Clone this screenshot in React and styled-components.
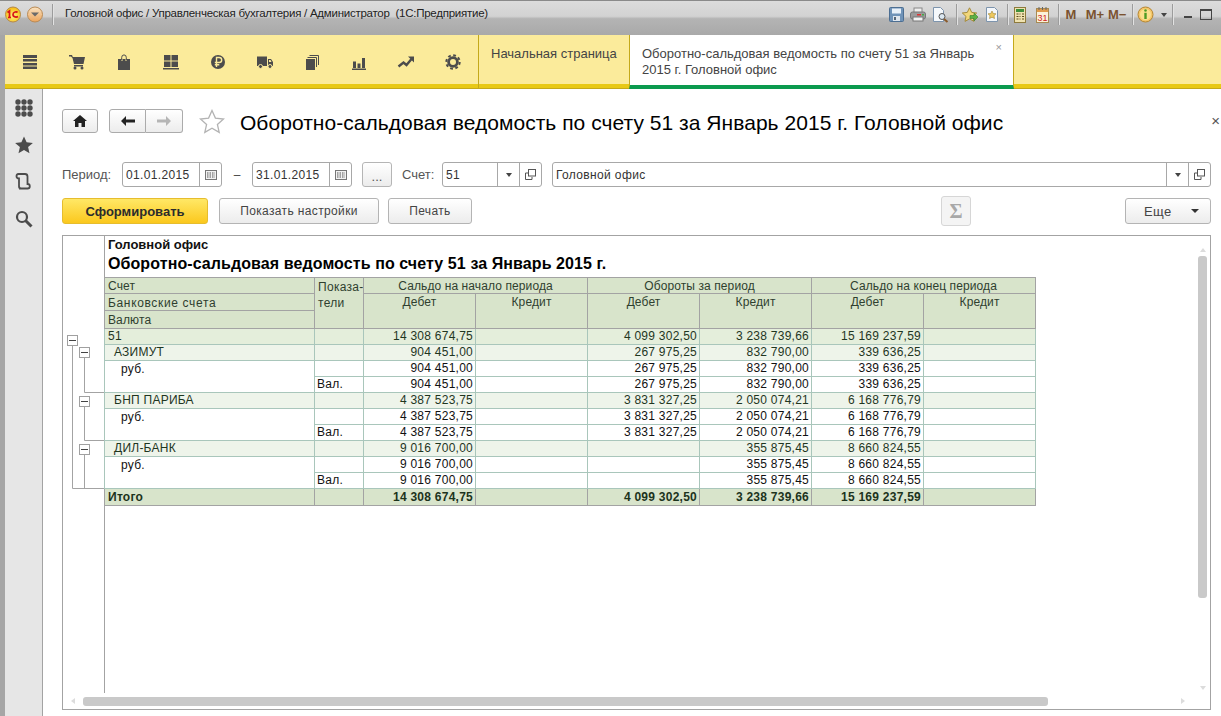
import React from 'react';
import styled, { createGlobalStyle } from 'styled-components';

const Global = createGlobalStyle`
  html, body { margin: 0; padding: 0; background: #fff; }
  body { font-family: "Liberation Sans", Arial, sans-serif; font-size: 12px; color: #222; }
`;

const Shell = styled.div`
  width: 1221px; height: 716px; overflow: hidden; display: flex; flex-direction: column; background: #fff;
`;
const TitleBar = styled.header`
  height: 35px; flex: none; box-sizing: border-box; display: flex; align-items: flex-start; padding: 3px 0 0 2px;
  border-top: 1px solid #8a8a8a;
  background: linear-gradient(#dcdcdc 0, #d2d2d2 45%, #b4b4b4 52%, #a9a9a9 100%);
`;
const Sep = styled.span`
  width: 1px; height: 21px; background: #9c9c9c; box-shadow: 1px 0 0 #e2e2e2; flex: none;
  margin: 0 ${p => p.$r || 0}px 0 ${p => p.$l || 0}px;
`;
const TitleText = styled.span`
  font-size: 11.5px; line-height: 18px; color: #222; margin-left: 12px; white-space: pre; letter-spacing: -0.022em;
`;
const TitleTools = styled.div`
  margin-left: auto; display: flex; align-items: center; height: 21px;
`;
const ToolSlot = styled.span`
  display: inline-flex; align-items: center; justify-content: center; width: ${p => p.$w}px; height: 20px; flex: none;
`;
const MemText = styled.span`
  font-size: 13px; font-weight: 700; color: #7a5230; width: ${p => p.$w}px; text-align: center; flex: none;
`;
const Lower = styled.div`
  flex: 1; min-height: 0; display: flex; flex-direction: column; border-left: 5px solid #a6a6a6;
`;
const SectionBar = styled.nav`
  height: 54px; flex: none; box-sizing: border-box; display: flex; background: #fbeb9b; position: relative;
  border-bottom: 1px solid #c4a91a; box-shadow: inset 0 -4px 0 #e8c916;
`;
const SectionIcons = styled.div`
  width: 473px; flex: none; box-sizing: border-box; display: flex; align-items: flex-start; padding: 18px 0 0 1px;
`;
const SectionCell = styled.span`
  width: 47px; display: flex; justify-content: center; flex: none; color: #4c4c4c;
`;
const Tab = styled.div`
  box-sizing: border-box; flex: none; width: ${p => p.$w}px; position: relative; font-size: 13px; line-height: 16px; color: #444;
  padding: ${p => (p.$active ? '11px 30px 0 12px' : '11px 8px 0 12px')};
  border-left: 1px solid #c4a91a;
  ${p => p.$active && `
    background: #fff; border-right: 1px solid #c4a91a; height: 54px; border-bottom: 4px solid #0b9a4e;
    box-shadow: inset 1px 0 0 #fff;
  `}
`;
const TabClose = styled.span`
  position: absolute; right: 11px; top: 5px; font-size: 11px; color: #999; line-height: 14px;
`;
const Body = styled.div`
  flex: 1; min-height: 0; display: flex;
`;
const Sidebar = styled.aside`
  width: 38px; flex: none; box-sizing: border-box; background: #e6e6e6; border-right: 1px solid #a3a3a3;
  display: flex; flex-direction: column; align-items: center; padding-top: 9px; gap: 17px; color: #4c4c4c;
`;
const Main = styled.main`
  flex: 1; min-width: 0; box-sizing: border-box; padding: 20px 10px 0 19px; display: flex; flex-direction: column;
`;
const HeadRow = styled.div`
  display: flex; align-items: center; height: 24px; margin-bottom: 29px;
`;
const NavBtn = styled.span`
  width: ${p => p.$w}px; height: 24px; box-sizing: border-box; display: inline-flex; align-items: center; justify-content: center;
  border: 1px solid #ababab; background: linear-gradient(#fff, #ececec); flex: none;
  border-radius: ${p => p.$radius || '3px'};
  ${p => p.$joined && 'border-left: none;'}
`;
const HomeBtn = styled(NavBtn)`margin-right: 11px;`;
const PageTitle = styled.h1`
  margin: 0 0 0 15px; padding-top: 4px; font-size: 21px; font-weight: 400; color: #000; white-space: nowrap; line-height: 24px; letter-spacing: 0.04px;
`;
const CloseX = styled.span`
  margin-left: auto; margin-right: -10px; font-size: 15px; color: #555; line-height: 20px; padding-right: 1px;
`;
const FilterRow = styled.div`
  display: flex; align-items: center; height: 25px; margin-bottom: 11px;
`;
const Label = styled.span`
  color: #555; font-size: 13px; width: ${p => p.$w}px; flex: none;
`;
const Dash = styled.span`
  width: 30px; flex: none; text-align: center; color: #444;
`;
const Field = styled.div`
  width: ${p => p.$w}px; height: 25px; box-sizing: border-box; flex: none; display: flex; border: 1px solid #a8a8a8; border-radius: 3px; background: #fff;
  margin-left: ${p => p.$ml || 0}px;
`;
const FieldText = styled.span`
  flex: 1; padding: 1px 0 0 3px; line-height: 23px; color: #333; font-size: 12px; letter-spacing: 0.03em;
`;
const FieldBtn = styled.span`
  width: 22px; flex: none; display: flex; align-items: center; justify-content: center; border-left: 1px solid #a8a8a8; box-sizing: border-box;
`;
const DotsBtn = styled.span`
  width: 30px; height: 25px; box-sizing: border-box; flex: none; margin: 0 10px; text-align: center; line-height: 27px; color: #555; font-size: 13px;
  border: 1px solid #b5b5b5; border-radius: 3px; background: linear-gradient(#fff, #ececec);
`;
const ActionRow = styled.div`
  display: flex; align-items: center; height: 26px; margin-bottom: 11px;
`;
const Btn = styled.span`
  height: 26px; width: ${p => p.$w}px; margin-right: ${p => p.$mr || 0}px; box-sizing: border-box; flex: none; display: inline-flex; align-items: center; justify-content: center;
  font-size: 12px; color: #444; border: 1px solid #b4b4b4; border-radius: 3px; background: linear-gradient(#fff, #ececec); letter-spacing: 0.03em;
`;
const PrimaryBtn = styled(Btn)`
  background: linear-gradient(#ffe866, #fbc81e); border-color: #e6bd2e; color: #2c2c2c; font-weight: 700; font-size: 13px; letter-spacing: 0;
`;
const SigmaBtn = styled.span`
  margin-left: auto; width: 30px; height: 30px; margin-top: -2px; margin-bottom: -2px; box-sizing: border-box; flex: none; display: inline-flex; align-items: center; justify-content: center;
  border: 1px solid #d6d6d6; border-radius: 3px; background: #f4f4f4; color: #a8a8a8; font: 700 20px "Liberation Serif", serif;
`;
const MoreBtn = styled(Btn)`
  margin-left: 154px; justify-content: flex-start; padding-left: 18px; position: relative; font-size: 13px;
`;
const MoreCaret = styled.span`
  position: absolute; right: 11px; top: 10px; width: 0; height: 0; border: 4px solid transparent; border-top: 4px solid #333; border-bottom: none;
`;
const Report = styled.section`
  height: 475px; width: 1149px; box-sizing: border-box; flex: none; position: relative; display: flex; align-items: flex-start; border: 1px solid #a3a3a3; overflow: hidden;
`;
const Gutter = styled.svg`
  width: 41px; height: 457px; flex: none; display: block;
`;
const Sheet = styled.div`
  height: 457px; box-sizing: border-box; border-left: 1px solid #a3a3a3; flex: none;
`;
const SheetOrg = styled.div`
  font-weight: 700; color: #111; font-size: 13px; line-height: 16px; padding: 1px 0 0 3px; height: 15px;
`;
const SheetTitle = styled.div`
  font-weight: 700; color: #000; font-size: 16px; line-height: 24px; height: 25px; padding-left: 3px; white-space: nowrap; letter-spacing: 0.09px;
`;
const Grid = styled.table`
  border-collapse: collapse; table-layout: fixed; width: 931px; margin-left: -1px; font-size: 12px;
  border-top: 1px solid #a3a3a3;
`;
const Hc = styled.td`
  box-sizing: border-box; background: #d8e4cb; color: #2f3f2f; border: 1px solid #a3a3a3; vertical-align: top; padding: ${p => p.$top ?? 1}px 3px 0;
  line-height: ${p => p.$lh || 14}px; overflow: hidden; white-space: pre;
  letter-spacing: ${p => p.$ls ?? 0.12}px;
  height: ${p => p.$h || 16}px; text-align: ${p => (p.$center ? 'center' : 'left')};
`;
const rowBg = { 1: '#e4eedb', 2: '#eef4ea', 3: '#fff', t: '#d8e4cb' };
const rowColor = { 1: '#1f361f', 2: '#1f361f', 3: '#111', t: '#1c331c' };
const Cell = styled.td`
  box-sizing: border-box; height: 16px; padding: ${p => p.$top || 0}px 2px 0 ${p => p.$pad ?? 2}px; line-height: 15px; white-space: pre; overflow: hidden; vertical-align: top;
  border: 1px solid ${p => (p.$kind === 't' ? '#a3a3a3' : '#a9c6bb')};
  background: ${p => rowBg[p.$kind]}; color: ${p => rowColor[p.$kind]};
  font-weight: ${p => (p.$kind === 't' ? 700 : 400)};
  text-align: ${p => (p.$num ? 'right' : 'left')};
  letter-spacing: 0.25px;
`;
const ScrollV = styled.span`
  position: absolute; right: 3px; top: 20px; width: 9px; height: 342px; background: #c9c9c9; border-radius: 3px;
`;
const ScrollH = styled.span`
  position: absolute; left: 20px; bottom: 3px; height: 9px; width: 965px; background: #c9c9c9; border-radius: 3px;
`;
const Arrow = styled.span`
  position: absolute; width: 0; height: 0; border: 3px solid transparent;
  ${p => p.$dir === 'up' && 'border-bottom: 4px solid #dcdcdc; border-top: none; right: 4px; top: 12px;'}
  ${p => p.$dir === 'down' && 'border-top: 4px solid #dcdcdc; border-bottom: none; right: 4px; bottom: 19px;'}
  ${p => p.$dir === 'left' && 'border-right: 4px solid #dcdcdc; border-left: none; left: 8px; bottom: 5px;'}
  ${p => p.$dir === 'right' && 'border-left: 4px solid #dcdcdc; border-right: none; right: 25px; bottom: 5px;'}
`;

const Ico = ({ w = 18, h = 18, children }) => (
  <svg width={w} height={h} viewBox={`0 0 ${w} ${h}`} fill="currentColor" style={{ display: 'block' }}>{children}</svg>
);

const LogoBall = () => (
  <svg width="22" height="22" viewBox="0 0 22 22" style={{ flex: 'none', display: 'block' }}>
    <defs>
      <radialGradient id="yb" cx="50%" cy="60%" r="60%"><stop offset="0" stopColor="#fff27a" /><stop offset="1" stopColor="#f6b90f" /></radialGradient>
    </defs>
    <circle cx="11" cy="10.5" r="7.5" fill="url(#yb)" stroke="#b5894a" strokeWidth="1" />
    <path d="M5.5 8.5l2-1.5v6M9 13.5h-3M15.5 8.5c-.6-1-4.5-1-4.5 2s3.800 2.800 5 2" fill="none" stroke="#d8141a" strokeWidth="1.7" />
  </svg>
);
const MenuBall = () => (
  <svg width="22" height="22" viewBox="0 0 22 22" style={{ flex: 'none', display: 'block' }}>
    <defs>
      <linearGradient id="ob" x1="0" y1="0" x2="0" y2="1"><stop offset="0" stopColor="#f9e3c2" /><stop offset="1" stopColor="#eda45a" /></linearGradient>
    </defs>
    <circle cx="11" cy="10.500" r="7.500" fill="url(#ob)" stroke="#b98a55" />
    <path d="M7 8.500h8l-4 4z" fill="#6a6a6a" />
  </svg>
);

const Floppy = () => <svg width="15" height="15" viewBox="0 0 15 15"><rect x=".5" y=".5" width="14" height="14" rx="1" fill="#6f93b8" stroke="#4c6e92" /><rect x="3" y="1.500" width="9" height="5" fill="#e8f0f8" /><rect x="4" y="9" width="7" height="5" fill="#dfe6ee" /><rect x="5" y="10" width="2" height="3" fill="#567" /></svg>;
const Printer = () => <svg width="16" height="15" viewBox="0 0 16 15"><rect x="4" y="1" width="8" height="5" fill="#eee" stroke="#888" /><rect x=".5" y="5" width="15" height="7" rx="2" fill="#9b9b9b" stroke="#777" /><rect x="3" y="10" width="10" height="4" fill="#f3f3f3" stroke="#777" /><rect x="7" y="7" width="4" height="1.500" fill="#d33" /><rect x="12" y="7" width="2" height="1.500" fill="#4a4" /></svg>;
const Preview = () => <svg width="17" height="16" viewBox="0 0 17 16"><path d="M1.500.5h7l3 3v11h-10z" fill="#f5f8fb" stroke="#7d94ad" /><circle cx="10" cy="9.500" r="3" fill="#dbe8f2" stroke="#555" /><path d="M12 12l3.500 3" stroke="#8a5a2b" strokeWidth="2" /></svg>;
const StarArrow = () => <svg width="17" height="16" viewBox="0 0 17 16"><path d="M7.500.8l2.200 4.600 5 .6-3.700 3.400 1 5-4.500-2.500-4.500 2.500 1-5L.3 6l5-.6z" fill="#f2d67a" stroke="#a58b3c" /><path d="M8 8.500h4V6l4 4-4 4v-2.500H8z" fill="#5db044" stroke="#37802a" strokeWidth=".6" /></svg>;
const DocStar = () => <svg width="12" height="15" viewBox="0 0 12 15"><path d="M.5.500h8l3 3v11H.5z" fill="#f4f7fb" stroke="#7d94ad" /><path d="M6 4l1.200 2.500 2.800.3-2 1.900.5 2.800L6 10.200l-2.500 1.300.5-2.800-2-1.900 2.800-.3z" fill="#eec95f" stroke="#9f8436" strokeWidth=".6" /></svg>;
const Calc = () => <svg width="12" height="16" viewBox="0 0 12 16"><rect x=".5" y=".5" width="11" height="15" fill="#efe2b0" stroke="#8e7a3c" /><rect x="2" y="2" width="8" height="3" fill="#3f8f3a" /><path d="M2.500 7h2M5.500 7h1M8 7h2M2.500 9.500h2M5.500 9.500h1M8 9.500h2M2.500 12h2M5.500 12h1M8 12h2" stroke="#5b4a1c" strokeWidth="1.200" /></svg>;
const Calend = () => <svg width="13" height="16" viewBox="0 0 13 16"><rect x=".5" y="1.500" width="12" height="14" fill="#fbf1d8" stroke="#a68a53" /><rect x="1" y="2" width="11" height="3" fill="#e09a4a" /><path d="M3 0v3M6.500 0v3M10 0v3" stroke="#666" /><text x="6.500" y="14" fontSize="9" fontFamily="Liberation Sans" fill="#d01f1f" textAnchor="middle">31</text></svg>;
const InfoBall = () => <svg width="17" height="17" viewBox="0 0 17 17"><circle cx="8.500" cy="8.500" r="7.500" fill="#f5c66a" stroke="#b48633" /><circle cx="8.500" cy="8.500" r="5.500" fill="#fbe08e" /><circle cx="8.500" cy="4.500" r="1.300" fill="#4d9b25" /><rect x="7.300" y="6.800" width="2.400" height="6.200" fill="#4d9b25" /></svg>;

const Calendar = () => (
  <svg width="12" height="10" viewBox="0 0 12 10" style={{ display: 'block' }}>
    <rect x=".5" y=".5" width="11" height="9" fill="#f2f2f2" stroke="#777" />
    <path d="M2 3h1.500M4.500 3H6M7 3h1.500M9.500 3H10M2 5h1.500M4.500 5H6M7 5h1.500M9.500 5H10M2 7h1.500M4.500 7H6M7 7h1.500M9.500 7H10" stroke="#555" />
  </svg>
);
const Caret = () => <svg width="6" height="4" viewBox="0 0 6 4" style={{ display: 'block' }}><path d="M0 0h6L3 4z" fill="#444" /></svg>;
const OpenIco = () => (
  <svg width="11" height="11" viewBox="0 0 11 11" style={{ display: 'block' }} fill="none" stroke="#555">
    <rect x="3.500" y=".5" width="7" height="6.500" /><path d="M3 4H.5v6.500H7V8" />
  </svg>
);

const sectionIcons = [
  <Ico key="menu"><path d="M2 2h14v3H2zM2 6h14v2.600H2zM2 10h14v2.600H2zM2 13.500h14V16H2z" /></Ico>,
  <Ico key="cart"><path d="M1 2h3l.8 2H17l-1.500 7H6L4.500 5 3 3.500H1zM6 12h9v1.500H6z" /><circle cx="7" cy="15" r="1.500" /><circle cx="14" cy="15" r="1.500" /></Ico>,
  <Ico key="bag"><path d="M3 6h3.500v2h1V6h3v2h1V6H15v11H3z" /><path d="M6.700 7V4.500a2.300 2.600 0 0 1 4.600 0V7" fill="none" stroke="currentColor" /></Ico>,
  <Ico key="grid"><path d="M2 2h6.500v5.500H2zM9.500 2H16v5.500H9.500zM2 8.500h6.500V14H2zM9.500 8.500H16V14H9.500zM1 15h16v1.500H1z" /></Ico>,
  <Ico key="rub"><circle cx="9" cy="9" r="7" /><path d="M7.500 14V4.500h2.700a2.500 2.500 0 0 1 0 5H5.800M5.800 11.800h4.500" fill="none" stroke="#fbeb9b" strokeWidth="1.400" /></Ico>,
  <Ico key="truck"><path d="M1 3.500h10V13H1zM12 6h3l2 3v4h-5z" /><circle cx="4.500" cy="13.500" r="2" stroke="#fbeb9b" /><circle cx="14" cy="13.500" r="2" stroke="#fbeb9b" /><path d="M13 7h1.500l1 2H13z" fill="#fbeb9b" /></Ico>,
  <Ico key="docs"><path d="M3 6h9v11H3z" /><path d="M4.500 4.500h9V14M6.500 2.500h9V12" fill="none" stroke="currentColor" /></Ico>,
  <Ico key="chart"><path d="M3 8.500h3V15H3zM7.500 10.500h3V15h-3zM12 5h3v10h-3zM2 15.500h14V17H2z" /></Ico>,
  <Ico key="trend"><path d="M1.500 13.500l5-4 3 2.500 5-6" fill="none" stroke="currentColor" strokeWidth="2.400" /><path d="M11 3.500h6v6z" /></Ico>,
  <Ico key="gear"><circle cx="9" cy="9" r="4.400" fill="none" stroke="currentColor" strokeWidth="2.800" /><circle cx="9" cy="9" r="6.700" fill="none" stroke="currentColor" strokeWidth="2" strokeDasharray="2.800 2.460" /></Ico>,
];

const GridIco = () => <Ico w={20} h={20}><g>{[0, 1, 2].flatMap(r => [0, 1, 2].map(c => <circle key={`${r}${c}`} cx={4 + c * 6} cy={4 + r * 6} r="2.700" />))}</g></Ico>;
const StarIco = () => <Ico w={20} h={20}><path d="M10 1.500l2.600 5.800 6.300.6-4.800 4.200 1.400 6.200L10 15.100l-5.500 3.200 1.400-6.200L1.100 7.900l6.300-.6z" /></Ico>;
const ClipIco = () => <Ico w={20} h={20}><path d="M5 16.500h8.500a2.300 2.300 0 0 0 2.300-2.300c0-1.300-1-2.200-2.300-2.200V4.500A2.500 2.500 0 0 0 11 2H4.500C3 2 2.500 3 2.500 4.300S3.500 6.500 5 6.500v7.700c0 1.300 1 2.300 2.300 2.300" fill="none" stroke="currentColor" strokeWidth="1.800" /></Ico>;
const SearchIco = () => <Ico w={20} h={20}><circle cx="8" cy="8" r="5" fill="none" stroke="currentColor" strokeWidth="2.200" /><path d="M11.500 11.500l6 6" stroke="currentColor" strokeWidth="3" /></Ico>;

const Mark = ({ x, y }) => (
  <g>
    <rect x={x + .5} y={y + .5} width="10" height="10" fill="#fff" stroke="#a0a0a0" />
    <path d={`M${x + 2} ${y + 5.500}h7`} stroke="#444" />
  </g>
);

const groups = [
  ['АЗИМУТ', '904 451,00', '267 975,25', '832 790,00', '339 636,25'],
  ['БНП ПАРИБА', '4 387 523,75', '3 831 327,25', '2 050 074,21', '6 168 776,79'],
  ['ДИЛ-БАНК', '9 016 700,00', '', '355 875,45', '8 660 824,55'],
];
const Nums = ({ kind, v, top }) => (
  <>
    <Cell $kind={kind} $top={top} $num>{v[0]}</Cell><Cell $kind={kind} />
    <Cell $kind={kind} $top={top} $num>{v[1]}</Cell><Cell $kind={kind} $top={top} $num>{v[2]}</Cell>
    <Cell $kind={kind} $top={top} $num>{v[3]}</Cell><Cell $kind={kind} />
  </>
);

export default function App() {
  return (
    <Shell>
      <Global />
      <TitleBar>
        <LogoBall />
        <MenuBall />
        <Sep $l={6} />
        <TitleText>Головной офис / Управленческая бухгалтерия / Администратор  (1С:Предприятие)</TitleText>
        <TitleTools>
          <ToolSlot $w={22}><Floppy /></ToolSlot>
          <ToolSlot $w={22}><Printer /></ToolSlot>
          <ToolSlot $w={22}><Preview /></ToolSlot>
          <Sep $l={5} $r={2} />
          <ToolSlot $w={22}><StarArrow /></ToolSlot>
          <ToolSlot $w={22}><DocStar /></ToolSlot>
          <Sep $l={4} $r={1} />
          <ToolSlot $w={22}><Calc /></ToolSlot>
          <ToolSlot $w={22}><Calend /></ToolSlot>
          <Sep $l={5} $r={1} />
          <MemText $w={22}>M</MemText>
          <MemText $w={26}>M+</MemText>
          <MemText $w={18}>M−</MemText>
          <Sep $l={6} $r={2} />
          <ToolSlot $w={21}><InfoBall /></ToolSlot>
          <ToolSlot $w={16}><Caret /></ToolSlot>
          <Sep $r={6} />
          <ToolSlot $w={18}><svg width="8" height="3" style={{ marginTop: 5 }}><rect width="8" height="2" fill="#444" /></svg></ToolSlot>
          <ToolSlot $w={18}><svg width="12" height="11"><rect x=".5" y=".5" width="11" height="10" fill="none" stroke="#444" /><rect width="12" height="2" fill="#444" /></svg></ToolSlot>
          <ToolSlot $w={6} />
        </TitleTools>
      </TitleBar>
      <Lower>
        <SectionBar>
          <SectionIcons>
            {sectionIcons.map((ic, i) => <SectionCell key={i}>{ic}</SectionCell>)}
          </SectionIcons>
          <Tab $w={151}>Начальная страница</Tab>
          <Tab $w={385} $active>
            Оборотно-сальдовая ведомость по счету 51 за Январь 2015 г. Головной офис
            <TabClose>×</TabClose>
          </Tab>
        </SectionBar>
        <Body>
          <Sidebar>
            <GridIco /><StarIco /><ClipIco /><SearchIco />
          </Sidebar>
          <Main>
            <HeadRow>
              <HomeBtn $w={36}><svg width="14" height="12" viewBox="0 0 14 12"><path d="M7 0l7 6h-2v6H8.500V8h-3v4H2V6H0z" fill="#222" /></svg></HomeBtn>
              <NavBtn $w={37} $radius="3px 0 0 3px"><svg width="14" height="10" viewBox="0 0 14 10"><path d="M0 5l5-5v3.500h9v3H5V10z" fill="#222" /></svg></NavBtn>
              <NavBtn $w={37} $joined $radius="0 3px 3px 0"><svg width="14" height="10" viewBox="0 0 14 10"><path d="M14 5L9 0v3.500H0v3h9V10z" fill="#b5b5b5" /></svg></NavBtn>
              <svg width="26" height="25" viewBox="0 0 26 25" style={{ marginLeft: 16, flex: 'none' }}><path d="M13 1.500l3.400 7.600 8.100.9-6.100 5.400 1.800 8L13 19.300l-7.200 4.100 1.800-8L1.500 10l8.100-.9z" fill="#fff" stroke="#b3b3b3" strokeWidth="1.300" /></svg>
              <PageTitle>Оборотно-сальдовая ведомость по счету 51 за Январь 2015 г. Головной офис</PageTitle>
              <CloseX>×</CloseX>
            </HeadRow>
            <FilterRow>
              <Label $w={60}>Период:</Label>
              <Field $w={100}><FieldText>01.01.2015</FieldText><FieldBtn><Calendar /></FieldBtn></Field>
              <Dash>–</Dash>
              <Field $w={100}><FieldText>31.01.2015</FieldText><FieldBtn><Calendar /></FieldBtn></Field>
              <DotsBtn>...</DotsBtn>
              <Label $w={40}>Счет:</Label>
              <Field $w={100}><FieldText>51</FieldText><FieldBtn><Caret /></FieldBtn><FieldBtn><OpenIco /></FieldBtn></Field>
              <Field $w={659} $ml={10}><FieldText>Головной офис</FieldText><FieldBtn><Caret /></FieldBtn><FieldBtn><OpenIco /></FieldBtn></Field>
            </FilterRow>
            <ActionRow>
              <PrimaryBtn $w={146} $mr={11}>Сформировать</PrimaryBtn>
              <Btn $w={160} $mr={9}>Показать настройки</Btn>
              <Btn $w={84}>Печать</Btn>
              <SigmaBtn>Σ</SigmaBtn>
              <MoreBtn $w={86}>Еще<MoreCaret /></MoreBtn>
            </ActionRow>
            <Report>
              <Gutter viewBox="0 0 41 457">
                <path d="M9.500 108V252.500H41M21.500 120V156.500H41M21.500 170V204.500H41M21.500 218V252.500H41" fill="none" stroke="#a3a3a3" />
                <Mark x={4} y={99} />
                <Mark x={16} y={111} />
                <Mark x={16} y={160} />
                <Mark x={16} y={208} />
              </Gutter>
              <Sheet>
                <SheetOrg>Головной офис</SheetOrg>
                <SheetTitle>Оборотно-сальдовая ведомость по счету 51 за Январь 2015 г.</SheetTitle>
                <Grid>
                  <colgroup>
                    <col style={{ width: 210 }} /><col style={{ width: 49 }} />
                    {[0, 1, 2, 3, 4, 5].map(i => <col key={i} style={{ width: 112 }} />)}
                  </colgroup>
                  <tbody>
                    <tr>
                      <Hc>Счет</Hc>
                      <Hc rowSpan={3} $lh={16} $ls={0.3}>{'Показа-\nтели'}</Hc>
                      <Hc colSpan={2} $center $ls={0.1}>Сальдо на начало периода</Hc>
                      <Hc colSpan={2} $center $ls={0.1}>Обороты за период</Hc>
                      <Hc colSpan={2} $center $ls={0.1}>Сальдо на конец периода</Hc>
                    </tr>
                    <tr>
                      <Hc $h={17} $top={2} $ls={0.65}>Банковские счета</Hc>
                      {['Дебет', 'Кредит', 'Дебет', 'Кредит', 'Дебет', 'Кредит'].map((t, i) => <Hc key={i} rowSpan={2} $center>{t}</Hc>)}
                    </tr>
                    <tr><Hc $h={18} $top={2}>Валюта</Hc></tr>
                    <tr>
                      <Cell $kind={1} $pad={3}>51</Cell><Cell $kind={1} />
                      <Nums kind={1} v={['14 308 674,75', '4 099 302,50', '3 238 739,66', '15 169 237,59']} />
                    </tr>
                    {groups.map(([name, ...v]) => (
                      <React.Fragment key={name}>
                        <tr><Cell $kind={2} $pad={9}>{name}</Cell><Cell $kind={2} /><Nums kind={2} v={v} /></tr>
                        <tr><Cell $kind={3} $pad={16} $top={1} rowSpan={2}>руб.</Cell><Cell $kind={3} /><Nums kind={3} v={v} /></tr>
                        <tr><Cell $kind={3}>Вал.</Cell><Nums kind={3} v={v} /></tr>
                      </React.Fragment>
                    ))}
                    <tr>
                      <Cell $kind="t" $pad={3} $top={1}>Итого</Cell><Cell $kind="t" />
                      <Nums kind="t" top={1} v={['14 308 674,75', '4 099 302,50', '3 238 739,66', '15 169 237,59']} />
                    </tr>
                  </tbody>
                </Grid>
              </Sheet>
              <Arrow $dir="up" /><ScrollV /><Arrow $dir="down" />
              <Arrow $dir="left" /><ScrollH /><Arrow $dir="right" />
            </Report>
          </Main>
        </Body>
      </Lower>
    </Shell>
  );
}
